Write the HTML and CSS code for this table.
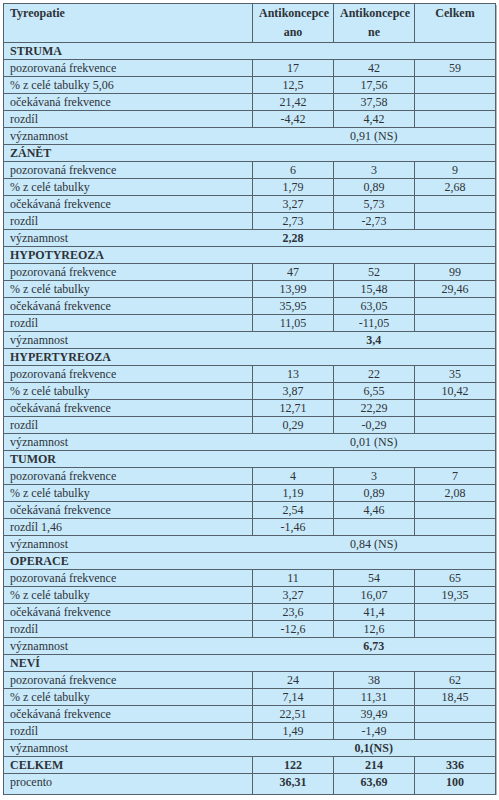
FILE: index.html
```html
<!DOCTYPE html>
<html>
<head>
    <meta charset="UTF-8"/>
    <title>Tyreopatie a antikoncepce</title>
    <link rel="stylesheet" href="styles.css">
</head>
<body>
<table class="data">
    <colgroup>
        <col class="c-name">
        <col class="c-num">
        <col class="c-num">
        <col class="c-num">
    </colgroup>
    <thead>
    <tr>
        <th class="left">Tyreopatie</th>
        <th>Antikoncepce<br>ano</th>
        <th>Antikoncepce<br>ne</th>
        <th>Celkem</th>
    </tr>
    </thead>
    <tbody>
    <tr class="section"><td colspan="4">STRUMA</td></tr>
    <tr><td>pozorovaná frekvence</td><td>17</td><td>42</td><td>59</td></tr>
    <tr><td>% z celé tabulky 5,06</td><td>12,5</td><td>17,56</td><td></td></tr>
    <tr><td>očekávaná frekvence</td><td>21,42</td><td>37,58</td><td></td></tr>
    <tr><td>rozdíl</td><td>-4,42</td><td>4,42</td><td></td></tr>
    <tr class="sig"><td>významnost</td><td colspan="3">0,91 (NS)</td></tr>

    <tr class="section"><td colspan="4">ZÁNĚT</td></tr>
    <tr><td>pozorovaná frekvence</td><td>6</td><td>3</td><td>9</td></tr>
    <tr><td>% z celé tabulky</td><td>1,79</td><td>0,89</td><td>2,68</td></tr>
    <tr><td>očekávaná frekvence</td><td>3,27</td><td>5,73</td><td></td></tr>
    <tr><td>rozdíl</td><td>2,73</td><td>-2,73</td><td></td></tr>
    <tr class="sig"><td>významnost</td><td colspan="3" class="shift"><b>2,28</b></td></tr>

    <tr class="section"><td colspan="4">HYPOTYREOZA</td></tr>
    <tr><td>pozorovaná frekvence</td><td>47</td><td>52</td><td>99</td></tr>
    <tr><td>% z celé tabulky</td><td>13,99</td><td>15,48</td><td>29,46</td></tr>
    <tr><td>očekávaná frekvence</td><td>35,95</td><td>63,05</td><td></td></tr>
    <tr><td>rozdíl</td><td>11,05</td><td>-11,05</td><td></td></tr>
    <tr class="sig"><td>významnost</td><td colspan="3"><b>3,4</b></td></tr>

    <tr class="section"><td colspan="4">HYPERTYREOZA</td></tr>
    <tr><td>pozorovaná frekvence</td><td>13</td><td>22</td><td>35</td></tr>
    <tr><td>% z celé tabulky</td><td>3,87</td><td>6,55</td><td>10,42</td></tr>
    <tr><td>očekávaná frekvence</td><td>12,71</td><td>22,29</td><td></td></tr>
    <tr><td>rozdíl</td><td>0,29</td><td>-0,29</td><td></td></tr>
    <tr class="sig"><td>významnost</td><td colspan="3">0,01 (NS)</td></tr>

    <tr class="section"><td colspan="4">TUMOR</td></tr>
    <tr><td>pozorovaná frekvence</td><td>4</td><td>3</td><td>7</td></tr>
    <tr><td>% z celé tabulky</td><td>1,19</td><td>0,89</td><td>2,08</td></tr>
    <tr><td>očekávaná frekvence</td><td>2,54</td><td>4,46</td><td></td></tr>
    <tr><td>rozdíl 1,46</td><td>-1,46</td><td></td><td></td></tr>
    <tr class="sig"><td>významnost</td><td colspan="3">0,84 (NS)</td></tr>

    <tr class="section"><td colspan="4">OPERACE</td></tr>
    <tr><td>pozorovaná frekvence</td><td>11</td><td>54</td><td>65</td></tr>
    <tr><td>% z celé tabulky</td><td>3,27</td><td>16,07</td><td>19,35</td></tr>
    <tr><td>očekávaná frekvence</td><td>23,6</td><td>41,4</td><td></td></tr>
    <tr><td>rozdíl</td><td>-12,6</td><td>12,6</td><td></td></tr>
    <tr class="sig"><td>významnost</td><td colspan="3"><b>6,73</b></td></tr>

    <tr class="section"><td colspan="4">NEVÍ</td></tr>
    <tr><td>pozorovaná frekvence</td><td>24</td><td>38</td><td>62</td></tr>
    <tr><td>% z celé tabulky</td><td>7,14</td><td>11,31</td><td>18,45</td></tr>
    <tr><td>očekávaná frekvence</td><td>22,51</td><td>39,49</td><td></td></tr>
    <tr><td>rozdíl</td><td>1,49</td><td>-1,49</td><td></td></tr>
    <tr class="sig"><td>významnost</td><td colspan="3"><b>0,1(NS)</b></td></tr>

    <tr class="total"><td>CELKEM</td><td>122</td><td>214</td><td>336</td></tr>
    <tr class="total last"><td class="plain">procento</td><td>36,31</td><td>63,69</td><td>100</td></tr>
    </tbody>
</table>
</body>
</html>
```

FILE: styles.css
```css
html, body {
    margin: 0;
    padding: 0;
    background: #fff;
}

body {
    padding: 3px 3px 0 3px;
    font-family: "Liberation Serif", "DejaVu Serif", serif;
    font-size: 12px;
    color: #2e3338;
}

.data {
    width: 493px;
    border-collapse: collapse;
    table-layout: fixed;
    background-color: #c8e9fa;
    border: 1px solid #55626c;
    box-shadow: 1px 2px 0 #b4b9bd;
}

.c-name {
    width: 249px;
}

.c-num {
    width: 81px;
}

.data th,
.data td {
    border: 1px solid #55626c;
    padding: 0 6px;
    height: 16px;
    line-height: 16px;
    text-align: center;
    white-space: nowrap;
}

.data th {
    height: 37px;
    line-height: 19px;
    vertical-align: top;
    padding-top: 0;
    font-weight: bold;
}

.data th.left,
.data td:first-child {
    text-align: left;
}

.section td {
    font-weight: bold;
}

.sig td {
    border-left: none;
    border-right: none;
}

.sig td.shift {
    text-align: left;
    padding-left: 30px;
}

.total td {
    font-weight: bold;
}

.total td.plain {
    font-weight: normal;
}

.last td {
    height: 20px;
    vertical-align: top;
}
```
